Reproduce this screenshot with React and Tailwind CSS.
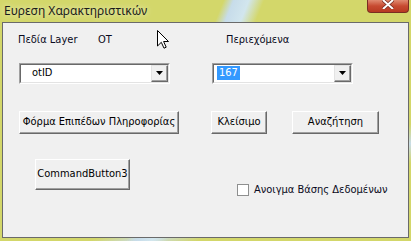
import React from "react";

const font = { fontFamily: '"DejaVu Sans Condensed", "DejaVu Sans", sans-serif' };

function Button({ className, children }) {
    return (
        <div
            className={"flex items-center justify-center bg-[#f0f0f0] border border-t-white border-l-white border-r-[#696969] border-b-[#696969] shadow-[inset_-1px_-1px_0_#a0a0a0] text-[11px] text-[#000] " + className}>
            {children}
        </div>
    );
}

function Combo({ className, children }) {
    return (
        <div className={"flex h-[21px] bg-white border border-t-[#a0a0a0] border-l-[#a0a0a0] border-r-white border-b-white " + className}>
            <div className="flex flex-1 border border-t-[#696969] border-l-[#696969] border-r-[#e3e3e3] border-b-[#e3e3e3]">
                <div className="flex-1 flex items-center text-[11px] text-black">{children}</div>
                <div className="w-[17px] flex items-center justify-center bg-[#f0f0f0] border border-t-[#e3e3e3] border-l-[#e3e3e3] border-r-[#696969] border-b-[#696969] shadow-[inset_-1px_-1px_0_#a0a0a0]">
                    <svg width="7" height="4" viewBox="0 0 7 4"><path d="M0 0H7L3.5 4Z" fill="#000" /></svg>
                </div>
            </div>
        </div>
    );
}

export default function App() {
    return (
        <div
            className="relative w-[411px] h-[241px] overflow-hidden bg-[#d3d76a] bg-[linear-gradient(112deg,transparent_44%,#c7dcea_46%,#d2e6ee_49%,transparent_52%),linear-gradient(160deg,transparent_70%,#c9dce8_75%,transparent_80%)]"
            style={font}>
            <div className="h-[22px] flex items-start justify-between">
                <div className="pl-[4px] pt-[2px] text-[12px] text-[#1b1b1b] [text-shadow:0_0_6px_rgba(255,255,255,0.8)]"
                     style={{fontFamily: '"Noto Sans", "Open Sans", sans-serif'}}>
                    Ευρεση Χαρακτηριστικών
                </div>
                <div className="mr-[2px] w-[42px] h-[13px] rounded-b-[4px] border border-t-0 border-[#7a2e22] bg-[linear-gradient(#e08a70,#c74a31_50%,#b73a22)] flex items-start justify-center">
                    <svg width="12" height="9" viewBox="0 0 12 9">
                        <path d="M1 0L6 4.5L11 0M1 9L6 4.5L11 9" stroke="#7a2e22" strokeWidth="3.5" fill="none" />
                        <path d="M1 0L6 4.5L11 0M1 9L6 4.5L11 9" stroke="#fff" strokeWidth="2" fill="none" />
                    </svg>
                </div>
            </div>
            <div className="ml-[2px] mr-[2px] h-[216px] border border-[#6a6a6a] bg-[#f0f0f0] relative">
                <div className="flex pl-[15px] pt-[9px] text-[11px] text-[#0a0a20]">
                    <span className="w-[80px]">Πεδία Layer</span>
                    <span className="w-[128px]">OT</span>
                    <span>Περιεχόμενα</span>
                </div>
                <div className="flex pl-[16px] mt-[14px] gap-[42px]">
                    <Combo className="w-[151px]"><span className="pl-[11px]">otID</span></Combo>
                    <Combo className="w-[141px]">
                        <span className="ml-[3px] px-[2px] bg-[#3399ff] text-white leading-[14px]">167</span>
                    </Combo>
                </div>
                <div className="flex pl-[16px] mt-[27px]">
                    <Button className="w-[160px] h-[23px]">Φόρμα Επιπέδων Πληροφορίας</Button>
                    <Button className="w-[56px] h-[23px] ml-[32px]">Κλείσιμο</Button>
                    <Button className="w-[87px] h-[23px] ml-[25px]">Αναζήτηση</Button>
                </div>
                <div className="flex items-end pl-[32px] mt-[25px]">
                    <Button className="w-[95px] h-[31px]">CommandButton3</Button>
                    <div className="flex items-center ml-[107px] mb-[-9px]">
                        <div className="w-[12px] h-[12px] bg-white border border-[#8e8f8f]" />
                        <span className="ml-[5px] text-[11px] text-[#0a0a20]">Ανοιγμα Βάσης Δεδομένων</span>
                    </div>
                </div>
            </div>
            <svg className="absolute left-[157px] top-[30px]" width="12" height="19" viewBox="0 0 12 19">
                <path d="M0.5 0.5V16L4.3 12.3L7 18.2L9.2 17.2L6.6 11.5H11.5Z" fill="#fff" stroke="#000" strokeWidth="1" />
            </svg>
        </div>
    );
}
